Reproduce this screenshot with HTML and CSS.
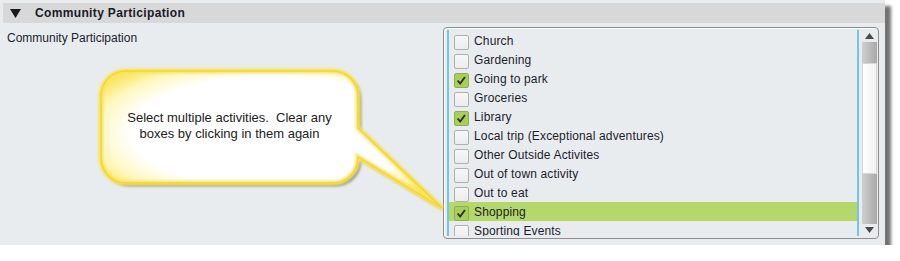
FILE: index.html
```html
<!DOCTYPE html>
<html lang="en">
<head>
    <meta charset="UTF-8">
    <title>Community Participation</title>
    <link rel="stylesheet" href="styles.css">
</head>
<body>
    <div class="panel">
        <div class="panel-head">
            <svg class="caret" width="11" height="9" viewBox="0 0 11 9"><path d="M0 0 H11 L5.5 9 Z" fill="#1b1b1b"/></svg>
            <span class="panel-title">Community Participation</span>
        </div>
        <div class="panel-body">
            <div class="field-label">Community Participation</div>
            <div class="listbox">
                <ul class="options">
                    <li><span class="box"></span>Church</li>
                    <li><span class="box"></span>Gardening</li>
                    <li><span class="box checked"><svg viewBox="0 0 15 15"><path d="M3 7.5 L6 11 L11.5 3.5" fill="none" stroke="#2e2e2e" stroke-width="2.2"/></svg></span>Going to park</li>
                    <li><span class="box"></span>Groceries</li>
                    <li><span class="box checked"><svg viewBox="0 0 15 15"><path d="M3 7.5 L6 11 L11.5 3.5" fill="none" stroke="#2e2e2e" stroke-width="2.2"/></svg></span>Library</li>
                    <li><span class="box"></span>Local trip (Exceptional adventures)</li>
                    <li><span class="box"></span>Other Outside Activites</li>
                    <li><span class="box"></span>Out of town activity</li>
                    <li><span class="box"></span>Out to eat</li>
                    <li class="selected"><span class="box checked"><svg viewBox="0 0 15 15"><path d="M3 7.5 L6 11 L11.5 3.5" fill="none" stroke="#2e2e2e" stroke-width="2.2"/></svg></span>Shopping</li>
                    <li><span class="box"></span>Sporting Events</li>
                </ul>
                <div class="scrollbar">
                    <div class="sb-btn"><svg width="9" height="6" viewBox="0 0 9 6"><path d="M0 6 H9 L4.5 0 Z" fill="#4a4a4a"/></svg></div>
                    <div class="sb-track"></div>
                    <div class="sb-thumb"></div>
                    <div class="sb-track sb-low"></div>
                    <div class="sb-btn"><svg width="9" height="6" viewBox="0 0 9 6"><path d="M0 0 H9 L4.5 6 Z" fill="#4a4a4a"/></svg></div>
                </div>
            </div>
        </div>

        <div class="callout">
            <svg width="360" height="160" viewBox="0 0 360 160">
                <defs>
                    <radialGradient id="fill" cx="50%" cy="45%" r="60%">
                        <stop offset="0" stop-color="#ffffff"/>
                        <stop offset="0.68" stop-color="#ffffff"/>
                        <stop offset="0.86" stop-color="#fff8c0"/>
                        <stop offset="1" stop-color="#f9e764"/>
                    </radialGradient>
                    <filter id="soft" x="-10%" y="-10%" width="120%" height="120%">
                        <feGaussianBlur stdDeviation="1.6"/>
                    </filter>
                    <filter id="glow" x="-10%" y="-10%" width="120%" height="120%">
                        <feGaussianBlur stdDeviation="1.2"/>
                    </filter>
                </defs>
                <path transform="translate(3 3)" fill="#7d7d7d" filter="url(#soft)" d="M31 6 H238 A25 25 0 0 1 263 31 V63 L347 143 L263 92 V93 A25 25 0 0 1 238 118 H31 A25 25 0 0 1 6 93 V31 A25 25 0 0 1 31 6 Z"/>
                <path fill="url(#fill)" stroke="#fbe35a" stroke-width="5" filter="url(#glow)" d="M31 6 H238 A25 25 0 0 1 263 31 V63 L347 143 L263 92 V93 A25 25 0 0 1 238 118 H31 A25 25 0 0 1 6 93 V31 A25 25 0 0 1 31 6 Z"/>
                <path fill="none" stroke="#f0d636" stroke-width="1.4" d="M31 6 H238 A25 25 0 0 1 263 31 V63 L347 143 L263 92 V93 A25 25 0 0 1 238 118 H31 A25 25 0 0 1 6 93 V31 A25 25 0 0 1 31 6 Z"/>
            </svg>
            <div class="callout-text">Select multiple activities.&nbsp; Clear any<br>boxes by clicking in them again</div>
        </div>
    </div>
</body>
</html>
```

FILE: styles.css
```css
body {
    margin: 0;
    background-color: #fff;
    font-family: 'Liberation Sans', Arial, sans-serif;
    color: #1c1c2c;
}
.panel {
    position: relative;
    width: 885px;
    height: 245px;
    box-sizing: border-box;
    padding-top: 3px;
    background-color: #e8ecef;
    box-shadow: 6px 6px 3px rgba(0,0,0,0.55);
}
.panel-head {
    display: flex;
    align-items: center;
    height: 20px;
    margin-left: 3px;
    padding-left: 7px;
    background-color: #d8d8d8;
}
.caret {
    display: block;
    margin-right: 14px;
}
.panel-title {
    font-weight: bold;
    font-size: 12px;
    letter-spacing: 0.35px;
    color: #1a1a28;
}
.panel-body {
    display: grid;
    grid-template-columns: 436px 436px;
    padding: 4px 0 0 7px;
}
.field-label {
    font-size: 12px;
    margin-top: 4px;
}
.listbox {
    display: flex;
    height: 212px;
    box-sizing: border-box;
    padding: 2px 1px 2px 3px;
    border: 1px solid #8e8e8e;
    border-radius: 4px;
    box-shadow: inset 1px 1px 0 #fff;
}
.options {
    list-style: none;
    margin: 0 3px 0 0;
    padding: 1px 0 0;
    width: 408px;
    overflow: hidden;
    border-left: 2px solid #74c4e4;
    border-right: 2px solid #74c4e4;
}
.options li {
    display: flex;
    align-items: center;
    height: 19px;
    padding-left: 5px;
    font-size: 12px;
    letter-spacing: 0.15px;
    color: #1c1c2c;
}
.options li.selected {
    background-color: #b4d96a;
}
.box {
    width: 15px;
    height: 15px;
    box-sizing: border-box;
    margin: 3px 5px 0 0;
    border: 1px solid #b0b0b0;
    border-radius: 2px;
    background: linear-gradient(#f7f7f7, #ececec);
}
.box svg {
    display: block;
    width: 13px;
    height: 13px;
}
.box.checked {
    background: #a8cf5c;
    border-color: #8fae52;
}
.scrollbar {
    display: flex;
    flex-direction: column;
    width: 15px;
}
.sb-btn {
    display: flex;
    align-items: center;
    justify-content: center;
    height: 12px;
}
.sb-track {
    height: 21px;
    background: linear-gradient(90deg, #cfcfcf, #a9a9a9);
}
.sb-low {
    height: 50px;
}
.sb-thumb {
    height: 112px;
    box-sizing: border-box;
    border: 1px solid #d6d6d6;
    background: linear-gradient(90deg, #ffffff, #f1f1f1);
}
.callout {
    position: absolute;
    left: 95px;
    top: 65px;
    width: 360px;
    height: 160px;
}
.callout svg {
    display: block;
}
.callout-text {
    position: absolute;
    left: 6px;
    top: 45px;
    width: 257px;
    text-align: center;
    font-size: 13px;
    line-height: 16px;
    color: #222;
}
```
